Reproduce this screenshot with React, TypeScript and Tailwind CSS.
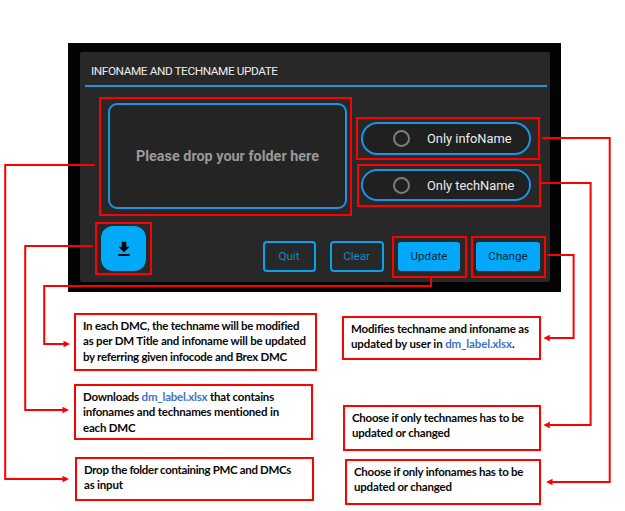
import type { ReactNode } from "react";

const Mark = ({ className, children }: { className: string; children: ReactNode }) => (
  <div className={`shrink-0 border-2 border-[#ff0000] ${className}`}>{children}</div>
);

const Option = ({ label, className }: { label: string; className: string }) => (
  <div className={`flex w-[170px] items-center rounded-full border-2 border-[#1b94e2] bg-[#202020] ${className}`}>
    <span className="ml-[30px] size-[17px] shrink-0 rounded-full border-2 border-[#7d7d7d]" />
    <span className="ml-[17px] whitespace-nowrap pt-px text-[12.85px] leading-4 text-[#ededed]">{label}</span>
  </div>
);

const Note = ({ className, children }: { className: string; children: ReactNode }) => (
  <div className={`whitespace-nowrap border-2 border-[#ff0000] bg-white pl-[7px] text-[11.5px] font-bold leading-[15.4px] tracking-[-0.2px] text-[#080808] ${className}`}>
    {children}
  </div>
);

const FileName = () => <span className="text-[#4472c4]">dm_label.xlsx</span>;

const Connectors = () => (
  <svg className="pointer-events-none absolute inset-0" width="625" height="511" viewBox="0 0 625 511">
    <g fill="none" stroke="#ff0000" strokeWidth="2">
      <path d="M95 165H5.2V479H64" />
      <path d="M93 246H25.2V410H64" />
      <path d="M431 277V286H44.2V344H65" />
      <path d="M542 138H609.7V482H551" />
      <path d="M541 183H590.6V425H549" />
      <path d="M547 255H573.6V338H549" />
    </g>
    <g fill="#ff0000">
      <path d="M62.5 475.7L69 479L62.5 482.3Z" />
      <path d="M62.5 406.7L69 410L62.5 413.3Z" />
      <path d="M63.5 340.7L70 344L63.5 347.3Z" />
      <path d="M552.5 478.7L546 482L552.5 485.3Z" />
      <path d="M549.8 421.7L543.3 425L549.8 428.3Z" />
      <path d="M549.8 334.7L543.3 338L549.8 341.3Z" />
    </g>
  </svg>
);

export default function App() {
  return (
    <div className="relative h-[511px] w-[625px] overflow-hidden bg-white pt-[43px] font-[Roboto,sans-serif]">
      <section className="ml-[68px] h-[249px] w-[493px] bg-[#030303] pl-3 pt-[9px]">
        <div className="h-[230px] w-[470px] rounded-[2px] bg-[#282828]">
          <h1 className="flex h-[33px] items-center pl-[11px] pt-[7px] text-[11.8px] tracking-[-0.42px] text-[#ececec]">INFONAME AND TECHNAME UPDATE</h1>
          <div className="ml-[5px] h-[2px] w-[462px] bg-[#2496cc]" />
          <div className="mt-[10px] flex pl-[19px]">
            <Mark className="h-[119px] w-[253px] pl-[7px] pt-[4px]">
              <div className="flex h-[106px] w-[239px] items-center justify-center rounded-[9px] border-2 border-[#1b94e2] bg-[#242424] pt-px text-[14.4px] font-bold text-[#999]">
                Please drop your folder here
              </div>
            </Mark>
            <div className="ml-1 flex flex-col gap-1 pt-5">
              <Mark className="h-[43px] w-[184px] pl-[3px] pt-[3px]">
                <Option label="Only infoName" className="h-[33px]" />
              </Mark>
              <Mark className="ml-px h-[43px] w-[184px] pl-[2px] pt-[3px]">
                <Option label="Only techName" className="h-[32px]" />
              </Mark>
            </div>
          </div>
          <div className="mt-[6px] flex pl-[15px] text-[11.6px]">
            <Mark className="h-[53px] w-[57px] pl-[4px] pt-[2px]">
              <button className="flex size-[45px] items-center justify-center rounded-[12px] bg-[#03a9f9]">
                <svg width="12" height="16" viewBox="0 0 12 16">
                  <path d="M3.7 0.7h4.6v5h3.2L6 11.2L0.5 5.7h3.2zM0.3 13h11.4v2H0.3z" fill="#050505" />
                </svg>
              </button>
            </Mark>
            <button className="ml-[111px] mt-[19px] h-[31px] w-[53px] rounded-[4px] border-2 border-[#05a3ee] pr-px pt-px text-[#1787c4]">Quit</button>
            <button className="ml-[14px] mt-[19px] h-[31px] w-[54px] rounded-[4px] border-2 border-[#05a3ee] pr-px pt-px text-[#1787c4]">Clear</button>
            <Mark className="ml-[8px] mt-[14px] h-[42px] w-[75px] pl-[4px] pt-[4px]">
              <button className="block h-[29px] w-[62px] rounded-[3px] bg-[#03a9f9] pt-px text-[#06263a]">Update</button>
            </Mark>
            <Mark className="ml-1 mt-[14px] h-[42px] w-[75px] pl-[3px] pt-[4px]">
              <button className="block h-[29px] w-[64px] rounded-[3px] bg-[#03a9f9] pt-px text-[#06263a]">Change</button>
            </Mark>
          </div>
        </div>
      </section>

      <div className="flex font-[Lato,sans-serif]">
        <div className="w-[268px] pl-[74px] pt-[21px]">
          <Note className="h-[58px] w-[243px] pt-[3px]">
            <p className="tracking-[-0.24px]">In each DMC, the techname will be modified</p>
            <p>as per DM Title and infoname will be updated</p>
            <p className="tracking-[-0.28px]">by referring given infocode and Brex DMC</p>
          </Note>
          <Note className="mt-[13px] h-[56px] w-[239px] pt-[3px]">
            <p>Downloads <FileName /> that contains</p>
            <p>infonames and technames mentioned in</p>
            <p>each DMC</p>
          </Note>
          <Note className="ml-px mt-[17px] h-[44px] w-[239px] pt-[3px]">
            <p className="tracking-[-0.33px]">Drop the folder containing PMC and DMCs</p>
            <p>as input</p>
          </Note>
        </div>
        <div className="ml-[74px] pt-[24px]">
          <Note className="h-[44px] w-[199px] pt-[3px]">
            <p>Modifies techname and infoname as</p>
            <p className="tracking-[-0.13px]">updated by user in <FileName />.</p>
          </Note>
          <Note className="ml-px mt-[45px] h-[46px] w-[198px] pt-[3px]">
            <p className="tracking-[-0.25px]">Choose if only technames has to be</p>
            <p>updated or changed</p>
          </Note>
          <Note className="ml-[3px] mt-[8px] h-[46px] w-[196px] pt-[3px]">
            <p className="tracking-[-0.25px]">Choose if only infonames has to be</p>
            <p>updated or changed</p>
          </Note>
        </div>
      </div>
      <Connectors />
    </div>
  );
}
